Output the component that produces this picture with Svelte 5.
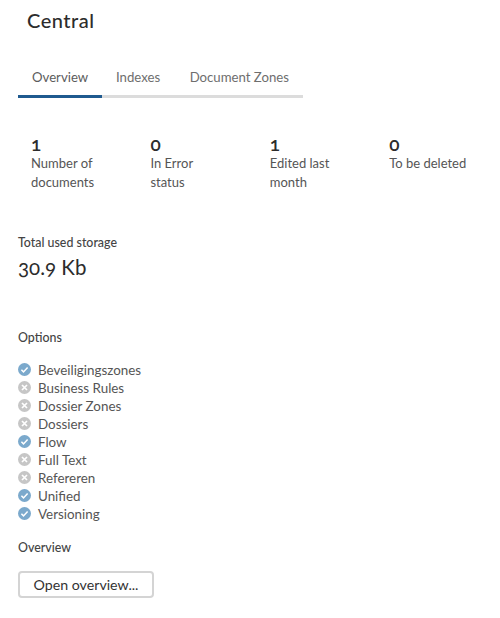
<script>
const tabs = ['Overview', 'Indexes', 'Document Zones'];

const stats = [
    { value: 1, label: 'Number of documents' },
    { value: 0, label: 'In Error status' },
    { value: 1, label: 'Edited last month' },
    { value: 0, label: 'To be deleted' }
];

const options = [
    { name: 'Beveiligingszones', on: true },
    { name: 'Business Rules', on: false },
    { name: 'Dossier Zones', on: false },
    { name: 'Dossiers', on: false },
    { name: 'Flow', on: true },
    { name: 'Full Text', on: false },
    { name: 'Refereren', on: false },
    { name: 'Unified', on: true },
    { name: 'Versioning', on: true }
];
</script>

<div class="page">
    <h1>Central</h1>

    <div class="tabs">
        {#each tabs as tab, i}
            <div class="tab" class:active={i === 0}>{tab}</div>
        {/each}
    </div>

    <div class="stats">
        {#each stats as s}
            <div class="stat">
                <div class="num">{s.value}</div>
                <div class="label">{s.label}</div>
            </div>
        {/each}
    </div>

    <h4 class="storage-title">Total used storage</h4>
    <div class="storage">30.9 Kb</div>

    <h4 class="options-title">Options</h4>
    <ul>
        {#each options as o}
            <li>
                <svg viewBox="0 0 13 13" width="13" height="13">
                    <circle cx="6.5" cy="6.5" r="6.5" fill={o.on ? '#7ba9cc' : '#c6c6c6'} />
                    {#if o.on}
                        <path d="M3.4 6.8l2.1 2.1 4.1-4.4" fill="none" stroke="#fff" stroke-width="1.5" />
                    {:else}
                        <path d="M4 4l5 5M9 4l-5 5" fill="none" stroke="#fff" stroke-width="1.7" />
                    {/if}
                </svg>
                {o.name}
            </li>
        {/each}
    </ul>

    <h4 class="overview-title">Overview</h4>
    <button>Open overview...</button>
</div>

<style>
:global(body) {
    margin: 0;
    background: #fff;
}
.page {
    height: 618px;
    box-sizing: border-box;
    padding: 8px 0 0 18px;
    font-family: "Lato", "Noto Sans", sans-serif;
    color: #4a4a4a;
    overflow: hidden;
    font-variant-numeric: oldstyle-nums;
}
h1 {
    margin: 0 0 0 9px;
    font-size: 20px;
    line-height: 24px;
    font-weight: 500;
    letter-spacing: 0.5px;
    color: #2c2c2c;
}
.tabs {
    display: flex;
    width: 285px;
    margin-top: 24px;
    border-bottom: 3px solid #dcdcdc;
}
.tab {
    padding: 0 14px;
    height: 39px;
    line-height: 42px;
    font-size: 13.2px;
    white-space: nowrap;
    color: #6e6e6e;
    margin-bottom: -3px;
    border-bottom: 3px solid transparent;
}
.tabs .tab:nth-child(2) {
    width: 46px;
}
.tab.active {
    width: 56px;
    color: #5c5c5c;
    border-bottom-color: #1f5a8f;
}
.stats {
    display: grid;
    grid-template-columns: repeat(4, 119.4px);
    margin: 36px 0 0 13px;
}
.stat {
    padding-right: 45px;
}
.stat:last-child {
    padding-right: 0;
    white-space: nowrap;
}
.num {
    font-size: 19px;
    line-height: 20px;
    font-weight: 600;
    color: #2c2c2c;
}
.label {
    font-size: 13px;
    line-height: 18.5px;
    color: #555;
}
h4 {
    margin: 0;
    font-size: 12.4px;
    line-height: 16px;
    font-weight: 500;
    color: #444;
}
.storage-title {
    margin-top: 44px;
}
.storage {
    margin-top: 4px;
    font-size: 20.5px;
    line-height: 24px;
    color: #2c2c2c;
}
.options-title {
    margin-top: 51px;
}
ul {
    list-style: none;
    margin: 15px 0 0;
    padding: 0;
}
li {
    display: flex;
    align-items: center;
    gap: 7px;
    height: 18px;
    font-size: 13.4px;
    color: #555;
}
svg {
    flex: none;
    margin-top: -2px;
}
.overview-title {
    margin-top: 17px;
}
button {
    display: block;
    margin-top: 15px;
    width: 136px;
    height: 27px;
    padding: 0;
    background: #fff;
    border: 2px solid #d4d4d4;
    border-radius: 4px;
    font-family: inherit;
    font-size: 14.2px;
    color: #333;
}
</style>
